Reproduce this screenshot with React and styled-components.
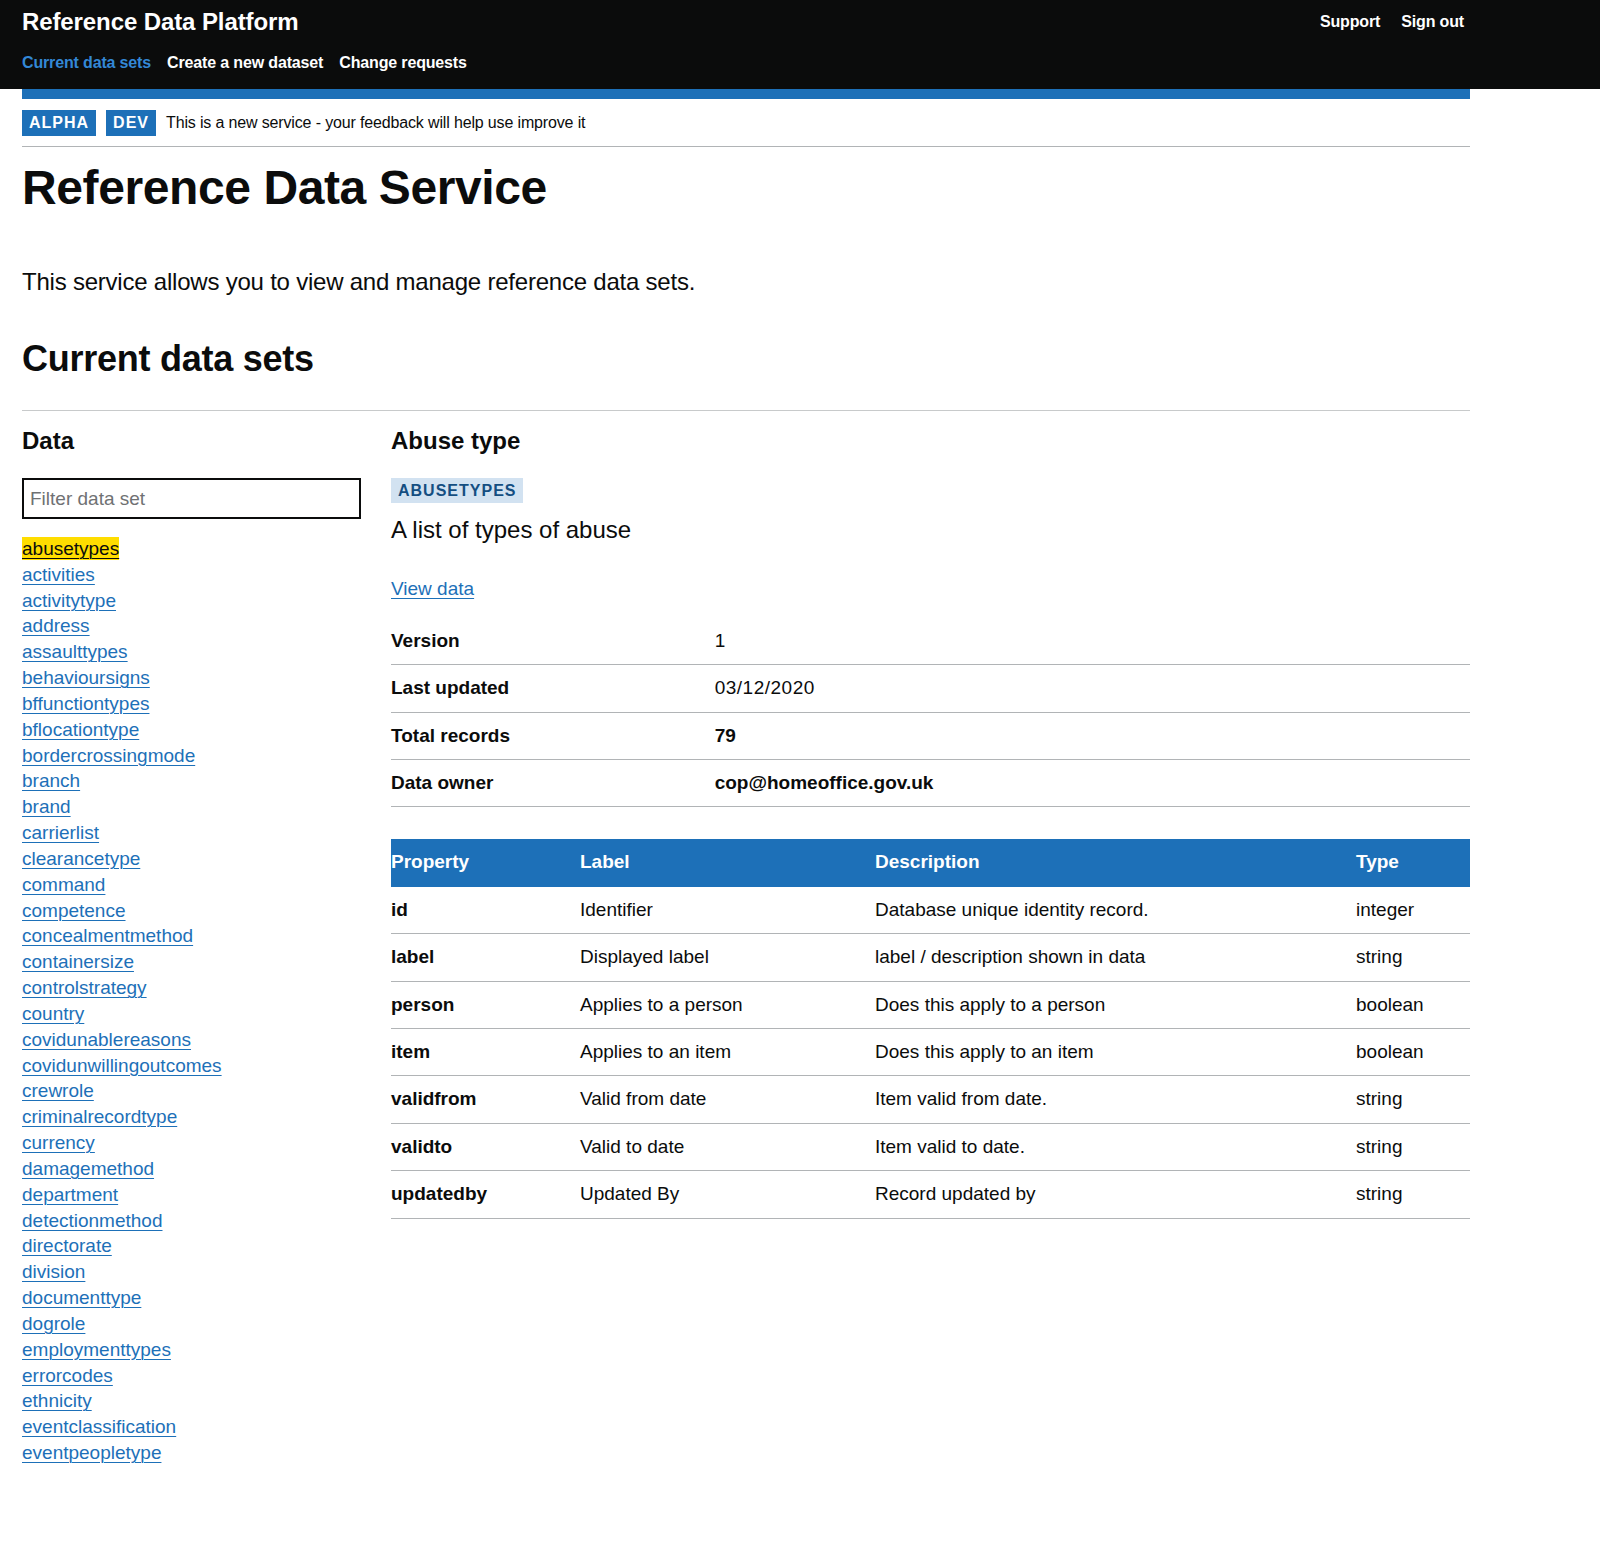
import styled, { createGlobalStyle } from "styled-components";

const GlobalStyle = createGlobalStyle`
  body {
    margin: 0;
    background: #fff;
    color: #0b0c0c;
    font-family: "Liberation Sans", Arial, sans-serif;
  }
  * { box-sizing: border-box; }
`;

const datasets = [
  "abusetypes", "activities", "activitytype", "address", "assaulttypes",
  "behavioursigns", "bffunctiontypes", "bflocationtype", "bordercrossingmode",
  "branch", "brand", "carrierlist", "clearancetype", "command", "competence",
  "concealmentmethod", "containersize", "controlstrategy", "country",
  "covidunablereasons", "covidunwillingoutcomes", "crewrole",
  "criminalrecordtype", "currency", "damagemethod", "department",
  "detectionmethod", "directorate", "division", "documenttype", "dogrole",
  "employmenttypes", "errorcodes", "ethnicity", "eventclassification",
  "eventpeopletype",
];

const summary = [
  { key: "Version", value: "1" },
  { key: "Last updated", value: "03/12/2020" },
  { key: "Total records", value: "79", strong: true },
  { key: "Data owner", value: "cop@homeoffice.gov.uk", strong: true },
];

const fields = [
  ["id", "Identifier", "Database unique identity record.", "integer"],
  ["label", "Displayed label", "label / description shown in data", "string"],
  ["person", "Applies to a person", "Does this apply to a person", "boolean"],
  ["item", "Applies to an item", "Does this apply to an item", "boolean"],
  ["validfrom", "Valid from date", "Item valid from date.", "string"],
  ["validto", "Valid to date", "Item valid to date.", "string"],
  ["updatedby", "Updated By", "Record updated by", "string"],
];

const App = () => {
  return (
    <>
      <GlobalStyle />
      <Header>
        <HeaderInner>
          <HeaderTop>
            <ServiceName>Reference Data Platform</ServiceName>
            <AccountLinks>
              <HeaderLink href="#">Support</HeaderLink>
              <HeaderLink href="#">Sign out</HeaderLink>
            </AccountLinks>
          </HeaderTop>
          <Nav>
            <HeaderLink href="#" $active>Current data sets</HeaderLink>
            <HeaderLink href="#">Create a new dataset</HeaderLink>
            <HeaderLink href="#">Change requests</HeaderLink>
          </Nav>
        </HeaderInner>
      </Header>

      <Container>
        <BlueBar />
        <PhaseBanner>
          <Tag>Alpha</Tag>
          <Tag>Dev</Tag>
          <PhaseText>This is a new service - your feedback will help use improve it</PhaseText>
        </PhaseBanner>

        <Title>Reference Data Service</Title>
        <Lead>This service allows you to view and manage reference data sets.</Lead>
        <SectionTitle>Current data sets</SectionTitle>

        <Columns>
          <Sidebar>
            <SubHeading>Data</SubHeading>
            <FilterInput type="text" placeholder="Filter data set" />
            <LinkList>
              {datasets.map((name, i) => (
                <li key={name}>
                  <ListLink href="#" $selected={i === 0}>{name}</ListLink>
                </li>
              ))}
            </LinkList>
          </Sidebar>

          <Detail>
            <SubHeading>Abuse type</SubHeading>
            <IdTag>abusetypes</IdTag>
            <Description>A list of types of abuse</Description>
            <ViewLink href="#">View data</ViewLink>

            <SummaryList>
              {summary.map((row) => (
                <SummaryRow key={row.key}>
                  <dt>{row.key}</dt>
                  <SummaryValue $strong={row.strong}>{row.value}</SummaryValue>
                </SummaryRow>
              ))}
            </SummaryList>

            <Table>
              <colgroup>
                <col style={{ width: 189 }} />
                <col style={{ width: 295 }} />
                <col style={{ width: 481 }} />
                <col />
              </colgroup>
              <thead>
                <tr>
                  <th>Property</th>
                  <th>Label</th>
                  <th>Description</th>
                  <th>Type</th>
                </tr>
              </thead>
              <tbody>
                {fields.map(([prop, label, desc, type]) => (
                  <tr key={prop}>
                    <PropCell>{prop}</PropCell>
                    <td>{label}</td>
                    <td>{desc}</td>
                    <td>{type}</td>
                  </tr>
                ))}
              </tbody>
            </Table>
          </Detail>
        </Columns>
      </Container>
    </>
  );
};

export default App;

const Header = styled.header`
  background: #0b0c0c;
  height: 89px;
`;

const HeaderInner = styled.div`
  width: 1448px;
  margin-left: 22px;
  padding-top: 7px;
`;

const HeaderTop = styled.div`
  display: flex;
  justify-content: space-between;
  align-items: flex-start;
`;

const ServiceName = styled.div`
  color: #fff;
  font-size: 24px;
  line-height: 30px;
  font-weight: 700;
  letter-spacing: -0.1px;
`;

const AccountLinks = styled.div`
  display: flex;
  gap: 21px;
  padding-top: 5px;
  padding-right: 6px;
`;

const Nav = styled.nav`
  display: flex;
  gap: 16px;
  margin-top: 16px;
`;

const HeaderLink = styled.a`
  color: ${(p) => (p.$active ? "#3388d6" : "#fff")};
  font-size: 16px;
  line-height: 20px;
  font-weight: 700;
  letter-spacing: -0.15px;
  text-decoration: none;
`;

const Container = styled.main`
  width: 1448px;
  margin-left: 22px;
  padding-bottom: 110px;
`;

const BlueBar = styled.div`
  height: 10px;
  background: #1d70b8;
`;

const PhaseBanner = styled.div`
  display: flex;
  align-items: center;
  gap: 10px;
  padding: 11px 0 10px;
  border-bottom: 1px solid #b1b4b6;
`;

const Tag = styled.strong`
  display: inline-block;
  background: #1d70b8;
  color: #fff;
  font-size: 16px;
  line-height: 16px;
  padding: 5px 7px;
  letter-spacing: 1px;
  text-transform: uppercase;
`;

const PhaseText = styled.span`
  font-size: 16px;
  line-height: 20px;
  letter-spacing: -0.15px;
`;

const Title = styled.h1`
  margin: 16px 0 0;
  font-size: 48px;
  line-height: 50px;
  font-weight: 700;
  letter-spacing: -0.4px;
`;

const Lead = styled.p`
  margin: 54px 0 0;
  font-size: 24px;
  line-height: 30px;
  letter-spacing: -0.22px;
`;

const SectionTitle = styled.h2`
  margin: 42px 0 0;
  font-size: 36px;
  line-height: 40px;
  font-weight: 700;
  letter-spacing: -0.25px;
  padding-bottom: 31px;
  border-bottom: 1px solid #c8cacb;
`;

const Columns = styled.div`
  display: flex;
  gap: 30px;
  padding-top: 15px;
`;

const Sidebar = styled.div`
  width: 339px;
  flex-shrink: 0;
`;

const Detail = styled.div`
  flex: 1;
`;

const SubHeading = styled.h3`
  margin: 0;
  font-size: 24px;
  line-height: 30px;
  font-weight: 700;
`;

const FilterInput = styled.input`
  display: block;
  width: 100%;
  height: 41px;
  margin-top: 22px;
  padding: 0 6px;
  border: 2px solid #0b0c0c;
  border-radius: 0;
  font-family: inherit;
  font-size: 19px;
  color: #0b0c0c;
  outline: none;

  &::placeholder {
    color: #6f7173;
  }
`;

const LinkList = styled.ul`
  list-style: none;
  margin: 17px 0 0;
  padding: 0;

  li {
    font-size: 19px;
    line-height: 25.83px;
  }
`;

const ListLink = styled.a`
  text-decoration: underline;
  text-decoration-thickness: 1px;
  text-underline-offset: 0.15em;
  padding: 1px 0;
  background: ${(p) => (p.$selected ? "#ffdd00" : "transparent")};
  color: ${(p) => (p.$selected ? "#0b0c0c" : "#1d70b8")};
  text-decoration-color: ${(p) => (p.$selected ? "#0b0c0c" : "#1d70b8")};
`;

const IdTag = styled.strong`
  display: inline-block;
  margin-top: 22px;
  background: #d2e2f1;
  color: #144e81;
  font-size: 16px;
  line-height: 17px;
  padding: 4px 7px;
  letter-spacing: 1px;
  text-transform: uppercase;
`;

const Description = styled.p`
  margin: 12px 0 0;
  font-size: 24px;
  line-height: 30px;
`;

const ViewLink = styled.a`
  display: inline-block;
  margin-top: 31px;
  font-size: 19px;
  line-height: 25px;
  color: #1d70b8;
  text-decoration-thickness: 1px;
  text-underline-offset: 0.15em;
`;

const SummaryList = styled.dl`
  margin: 17px 0 0;
  font-size: 19px;
  line-height: 26.3px;
`;

const SummaryRow = styled.div`
  display: grid;
  grid-template-columns: 30% 1fr;
  border-bottom: 1px solid #b1b4b6;

  dt, dd {
    margin: 0;
    padding: 10px 20px 10px 0;
  }

  dt {
    font-weight: 700;
  }
`;

const SummaryValue = styled.dd`
  font-weight: ${(p) => (p.$strong ? 700 : 400)};
  letter-spacing: ${(p) => (p.$strong ? "0" : "0.5px")};
`;

const Table = styled.table`
  width: 100%;
  margin-top: 32px;
  border-collapse: collapse;
  table-layout: fixed;
  font-size: 19px;
  line-height: 26.45px;

  th, td {
    text-align: left;
    padding: 10px 20px 10px 0;
    border-bottom: 1px solid #b1b4b6;
    vertical-align: top;
  }

  th {
    background: #1d70b8;
    color: #fff;
    font-weight: 700;
    border-bottom-color: #1d70b8;
  }
`;

const PropCell = styled.td`
  font-weight: 700;
`;
